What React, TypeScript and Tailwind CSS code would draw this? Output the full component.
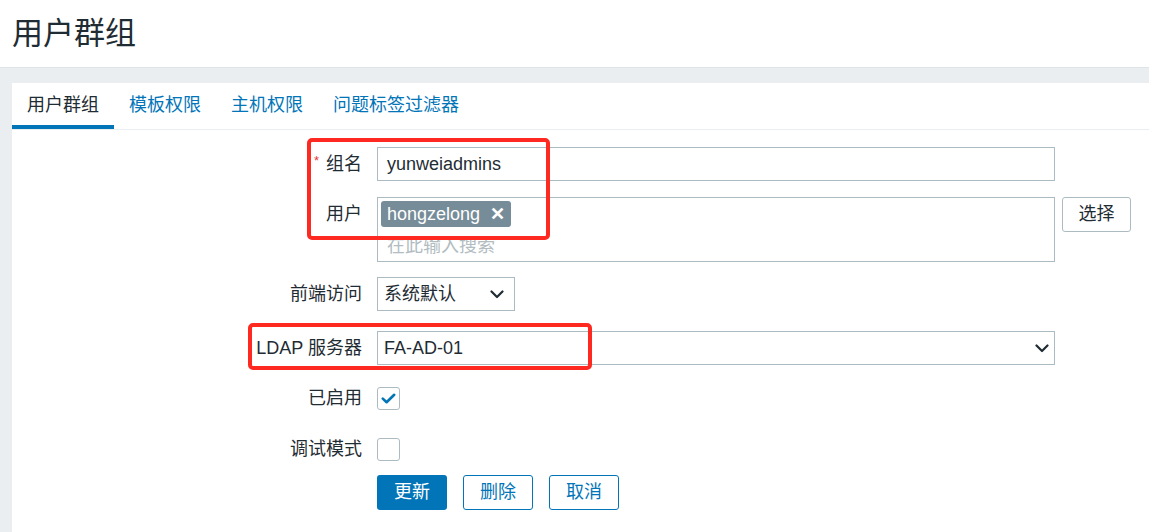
const Chevron = () => (
  <svg width="14" height="9" viewBox="0 0 14 9" fill="none" className="shrink-0">
    <path d="M1.5 1.5 L7 7 L12.5 1.5" stroke="#1f2c33" strokeWidth="2.2" strokeLinecap="round" strokeLinejoin="round" />
  </svg>
)

const Row = ({ label, required, top, children }: { label: string; required?: boolean; top?: boolean; children: React.ReactNode }) => (
  <div className={`flex ${top ? 'items-start' : 'items-center'}`}>
    <div className="w-[350px] h-[34px] flex items-center justify-end shrink-0">
      {required && <span className="text-[#e33734] text-[13px] leading-none mr-[7px] -mt-[8px]">*</span>}
      <span>{label}</span>
    </div>
    <div className="ml-[15px] flex items-start">{children}</div>
  </div>
)

const Checkbox = ({ checked }: { checked?: boolean }) => (
  <div className="w-[23px] h-[23px] border border-[#acbbc2] rounded-[3px] bg-white flex items-center justify-center">
    {checked && (
      <svg width="15" height="11" viewBox="0 0 15 11" fill="none">
        <path d="M1.8 5.6 L5.6 9.2 L13.2 1.8" stroke="#0275b8" strokeWidth="2.6" strokeLinecap="round" strokeLinejoin="round" />
      </svg>
    )}
  </div>
)

export default function App() {
  return (
    <div
      className="relative min-h-screen bg-[#ebeef0] text-[#1f2c33] text-[18px] flex flex-col"
      style={{ fontFamily: '"Liberation Sans", "Noto Sans CJK SC", sans-serif' }}
    >
      <header className="h-[68px] bg-white border-b border-[#dfe4e7] flex items-center px-3 shrink-0">
        <h1 className="text-[31px] leading-none">用户群组</h1>
      </header>

      <main className="flex-1 pl-3 pt-[15px] flex flex-col">
        <div className="flex-1 bg-white">
          <nav className="flex h-[47px] border-b border-[#ebeef0]">
            <div className="px-[15px] flex items-center border-b-[4px] border-[#0275b8] pt-[2px]">用户群组</div>
            <div className="px-[15px] flex items-center text-[#0275b8] pb-[2px]">模板权限</div>
            <div className="px-[15px] flex items-center text-[#0275b8] pb-[2px]">主机权限</div>
            <div className="px-[15px] flex items-center text-[#0275b8] pb-[2px]">问题标签过滤器</div>
          </nav>

          <form className="pt-[17px]">
            <Row label="组名" required>
              <div className="w-[678px] h-[34px] border border-[#acbbc2] flex items-center px-[9px]">yunweiadmins</div>
            </Row>

            <div className="mt-[16px]">
              <Row label="用户" top>
                <div className="w-[678px] h-[65px] border border-[#acbbc2] p-[3px] flex flex-col">
                  <div className="self-start h-[26px] bg-[#768d99] text-white rounded-[3px] flex items-center pl-[6px] pr-[6px]">
                    <span>hongzelong</span>
                    <span className="ml-[10px] text-[18px] font-bold leading-none">✕</span>
                  </div>
                  <div className="flex-1 flex items-center px-[6px] pt-[6px] text-[#b2bcc1]">在此输入搜索</div>
                </div>
                <button type="button" className="ml-[7px] w-[69px] h-[35px] border border-[#acbbc2] rounded-[3px] bg-white">选择</button>
              </Row>
            </div>

            <div className="mt-[15px]">
              <Row label="前端访问">
                <div className="w-[138px] h-[34px] border border-[#acbbc2] flex items-center justify-between pl-[6px] pr-[10px]">
                  <span>系统默认</span>
                  <Chevron />
                </div>
              </Row>
            </div>

            <div className="mt-[20px]">
              <Row label="LDAP 服务器">
                <div className="w-[678px] h-[34px] border border-[#acbbc2] flex items-center justify-between pl-[6px] pr-[5px]">
                  <span>FA-AD-01</span>
                  <Chevron />
                </div>
              </Row>
            </div>

            <div className="mt-[16px]">
              <Row label="已启用">
                <div className="h-[34px] flex items-center"><Checkbox checked /></div>
              </Row>
            </div>

            <div className="mt-[17px]">
              <Row label="调试模式">
                <div className="h-[34px] flex items-center"><Checkbox /></div>
              </Row>
            </div>

            <div className="mt-[9px] ml-[365px] flex gap-[16px]">
              <button type="button" className="w-[70px] h-[35px] rounded-[3px] bg-[#0275b8] text-white">更新</button>
              <button type="button" className="w-[70px] h-[35px] rounded-[3px] border border-[#0275b8] text-[#0275b8] bg-white">删除</button>
              <button type="button" className="w-[70px] h-[35px] rounded-[3px] border border-[#0275b8] text-[#0275b8] bg-white">取消</button>
            </div>
          </form>
        </div>
      </main>

      <div className="absolute left-[307px] top-[138px] w-[243px] h-[102px] border-[4px] border-[#fe2a22] rounded-[5px] pointer-events-none" />
      <div className="absolute left-[248px] top-[323px] w-[344px] h-[47px] border-[4px] border-[#fe2a22] rounded-[5px] pointer-events-none" />
    </div>
  )
}
